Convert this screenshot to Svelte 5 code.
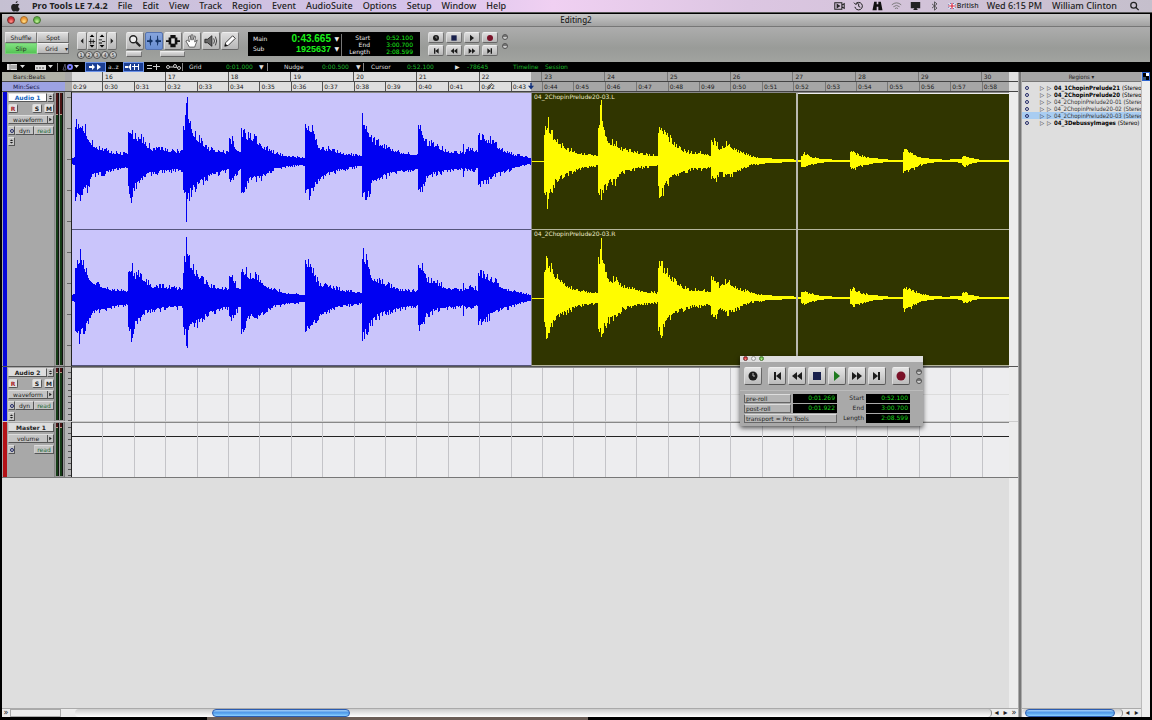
<script lang="ts">
	type Point = [x: number, up: number, down: number];

	const menus = ['File', 'Edit', 'View', 'Track', 'Region', 'Event', 'AudioSuite', 'Options', 'Setup', 'Window', 'Help'];
	const bars = Array.from({ length: 15 }, (_, i) => 16 + i);
	const seconds = Array.from({ length: 30 }, (_, i) => `0:${29 + i}`);

	const regions = [
		{ name: '04_1ChopinPrelude21', bold: true },
		{ name: '04_2ChopinPrelude20', bold: true },
		{ name: '04_2ChopinPrelude20-01' },
		{ name: '04_2ChopinPrelude20-02' },
		{ name: '04_2ChopinPrelude20-03', selected: true },
		{ name: '04_3DebussyImages', bold: true }
	];

	const tracks = [
		{ id: 'audio1', name: 'Audio 1', view: 'waveform', audio: true },
		{ id: 'audio2', name: 'Audio 2', view: 'waveform', audio: true },
		{ id: 'master', name: 'Master 1', view: 'volume', audio: false }
	];

	// envelope break points: x, height above and below the centre line
	const before: Point[] = [
		[0, 3, 3], [2, 4, 5], [3, 34, 34], [8, 39, 37], [12, 33, 30], [16, 22, 25], [20, 17, 15], [26, 13, 13], [32, 11, 12], [40, 8, 9], [55, 7, 7],
		[56, 26, 27], [59, 30, 40], [62, 22, 26], [67, 24, 22], [73, 17, 14], [80, 12, 12], [93, 11, 10], [110, 9, 9],
		[111, 28, 32], [113, 42, 36], [114, 63, 50], [116, 38, 33], [121, 27, 27], [128, 20, 22], [136, 12, 16], [146, 10, 12], [156, 8, 9],
		[157, 18, 20], [160, 21, 20], [164, 12, 13], [168, 10, 8], [169, 28, 31], [173, 26, 30], [177, 22, 17], [183, 21, 18], [190, 15, 16], [200, 9, 9], [213, 5, 6], [232, 3, 4],
		[233, 37, 32], [238, 34, 33], [242, 22, 25], [248, 12, 19], [256, 12, 13], [268, 8, 9], [289, 5, 5],
		[290, 42, 38], [295, 33, 34], [300, 20, 22], [308, 17, 17], [318, 12, 13], [328, 8, 11], [345, 7, 8],
		[346, 34, 27], [349, 32, 30], [354, 18, 17], [361, 17, 13], [373, 10, 10], [390, 8, 8], [391, 17, 17], [392, 8, 8], [398, 12, 10], [405, 8, 8],
		[406, 25, 26], [412, 22, 20], [418, 20, 18], [428, 12, 12], [438, 7, 9], [448, 5, 5], [459, 3, 3]
	];
	const after: Point[] = [
		[0, 0, 1], [11, 0, 1], [12, 30, 28], [15, 38, 40], [19, 27, 27], [24, 21, 20], [31, 13, 15], [39, 10, 11], [49, 7, 7], [65, 5, 5],
		[66, 36, 28], [69, 48, 35], [72, 30, 28], [77, 18, 20], [84, 17, 20], [89, 12, 11], [99, 10, 9], [109, 7, 6], [125, 5, 5],
		[126, 28, 28], [129, 32, 34], [133, 25, 25], [139, 20, 17], [149, 11, 12], [159, 8, 8], [169, 8, 8], [178, 6, 7],
		[179, 17, 17], [183, 18, 19], [187, 12, 11], [195, 17, 15], [201, 11, 13], [209, 8, 8], [219, 5, 4], [229, 3, 3], [244, 2, 2], [269, 1, 1],
		[270, 5, 5], [273, 7, 6], [279, 4, 4], [289, 2, 2], [304, 1, 1], [318, 1, 1],
		[319, 8, 7], [322, 9, 8], [329, 5, 5], [339, 3, 3], [359, 1, 1], [371, 1, 1],
		[372, 10, 11], [379, 8, 9], [389, 4, 4], [399, 2, 2], [414, 1, 1], [430, 2, 2], [432, 6, 6], [439, 3, 3], [449, 1, 1], [478, 1, 1]
	];

	function wave(points: Point[], seed: number) {
		let state = seed;
		const noise = () => (state = (state * 16807) % 2147483647) / 2147483647;
		const jitter = (v: number) => (v < 3 ? v : Math.round(v * (0.86 + noise() ** 2 * 0.42)));
		let d = '';
		let k = 0;
		for (let x = 0; x < points[points.length - 1][0]; x++) {
			while (points[k + 1][0] <= x) k++;
			const [x0, u0, d0] = points[k];
			const [x1, u1, d1] = points[k + 1];
			const t = (x - x0) / (x1 - x0);
			const up = jitter(u0 + (u1 - u0) * t);
			const down = jitter(d0 + (d1 - d0) * t);
			d += `M${x} ${-up}h1v${up + down}h-1z`;
		}
		return d;
	}

	const clips = [
		{ id: 'before', width: 459, points: before, label: '' },
		{ id: 'after', width: 478, points: after, label: '04_2ChopinPrelude20-03' }
	];

	const stepper = 'M2 5l4-4 4 4zM2 7l4 4 4-4z';
	const transport: [string, string][] = [
		['Return to zero', 'M3 2h2v8H3zM10 2v8L5 6z'],
		['Rewind', 'M6 2v8L1 6zM11 2v8L6 6z'],
		['Stop', 'M2 2h8v8H2z'],
		['Play', 'M3 1l6 5-6 5z'],
		['Fast forward', 'M1 2l5 4-5 4zM6 2l5 4-5 4z'],
		['Go to end', 'M2 2l5 4-5 4zM7 2h2v8H7z']
	];
	const compact = [2, 3, 0, 1, 4, 5];
</script>

{#snippet glyph(path: string, kind = '')}
	<svg class="glyph {kind}" viewBox="0 0 12 12" aria-hidden="true"><path d={path} /></svg>
{/snippet}
{#snippet clock()}
	<svg class="glyph" viewBox="0 0 12 12" aria-hidden="true"><circle cx="6" cy="6" r="4.5" /><path d="M6 3v3h2" fill="none" stroke="#bbb" /></svg>
{/snippet}
{#snippet record()}
	<svg class="glyph rec" viewBox="0 0 12 12" aria-hidden="true"><circle cx="6" cy="6" r="4.5" /></svg>
{/snippet}
{#snippet lights()}
	<div class="lights"><button aria-label="Close"></button><button aria-label="Minimize"></button><button aria-label="Zoom"></button></div>
{/snippet}

<div class="desktop">
	<nav class="menubar" aria-label="Menu bar">
		<svg class="apple" viewBox="0 0 14 14" aria-hidden="true"><path d="M9.7 0C9.8 1.500 8.700 2.900 7.200 3 7 1.600 8.300.2 9.700 0zM12 4.600C9.700 5.900 10.200 9 12.400 9.800 11.700 11.700 10.600 13.500 9.400 13.500c-1 0-1.300-.6-2.400-.6s-1.500.6-2.400.6C2.700 13.500.4 8.200 2 5.500c1.300-2.300 3.500-2 4.800-1.300C8.500 3.300 10.700 3 12 4.600z" /></svg>
		<button class="app">Pro Tools LE 7.4.2</button>
		{#each menus as menu (menu)}<button>{menu}</button>{/each}
		<div class="status">
			<svg viewBox="0 0 14 12" fill="none" stroke="#222" stroke-width="1.300"><path d="M1 2h9v8H1zM10 5l3-2v6l-3-2" /><path d="M4 4v4l3-2z" fill="#222" /></svg>
			<svg viewBox="0 0 12 12" fill="none" stroke="#222" stroke-width="1.200"><path d="M2.500 3.500A4.500 4.500 0 1 1 1.700 7M6.200 3v3.500l2 1M.5 2l2 2 2.500-1" /></svg>
			<svg viewBox="0 0 12 12"><path d="M2 1h3v3h2V1h3l2 10H7V7H5v4H0z" fill="#111" /></svg>
			<svg class="wifi" viewBox="0 0 14 12" fill="none" stroke="#777" stroke-width="1.200"><path d="M1 4.500q6-5 12 0M3 7q4-3.500 8 0M5 9.300q2-1.700 4 0" /></svg>
			<svg viewBox="0 0 14 12"><path d="M1 1h12v8H1zM4 11l3-4 3 4z" fill="#222" /></svg>
			<svg viewBox="0 0 12 12" fill="none" stroke="#444"><path d="M3 3.500l6 5-3 2.500V1l3 2.500-6 5" /></svg>
			<span class="lang">
				<svg viewBox="0 0 12 10"><path fill="#32479a" d="M0 0h12v10H0z" /><path stroke="#fff" stroke-width="2" d="M0 0l12 10M12 0L0 10" /><path stroke="#fff" stroke-width="4" d="M6 0v10M0 5h12" /><path stroke="#d3223c" stroke-width="2" d="M6 0v10M0 5h12" /></svg>
				British
			</span>
			<time>Wed 6:15 PM</time>
			<span class="user">William Clinton</span>
			<svg viewBox="0 0 12 12" fill="none" stroke="#222" stroke-width="1.500"><circle cx="5" cy="5" r="3.500" /><path d="M7.500 7.500L11 11" /></svg>
		</div>
	</nav>

	<main class="window">
		<header class="titlebar">{@render lights()}<h1>Editing2</h1></header>

		<div class="toolbar">
			<div class="modes">
				<button>Shuffle</button><button>Spot</button><button class="on">Slip</button><button>Grid<i>▾</i></button>
			</div>
			<div class="zoomer">
				<div class="row">
					<button aria-label="Zoom out">{@render glyph('M8 2v8L4 6z')}</button>
					<button aria-label="Audio zoom"><svg viewBox="0 0 10 16"><path d="M2 3l3-3 3 3zM2 13l3 3 3-3zM1 8h8v1H1zM3 5h1v7H3zM6 6h1v5H6z" /></svg></button>
					<button aria-label="MIDI zoom"><svg viewBox="0 0 10 16"><path d="M2 3l3-3 3 3zM2 13l3 3 3-3zM1 6h4v1H1zM5 8h4v1H5zM1 10h4v1H1z" /></svg></button>
					<button aria-label="Zoom in">{@render glyph('M4 2v8l4-4z')}</button>
				</div>
				<div class="presets">{#each [1, 2, 3, 4, 5] as n (n)}<button>{n}</button>{/each}</div>
			</div>
			<div class="tools">
				<div class="row">
					<button aria-label="Zoomer"><svg viewBox="0 0 16 16"><circle cx="6" cy="6" r="4" fill="#eee" stroke="#222" stroke-width="1.500" /><path d="M9 9l5 5" stroke="#222" stroke-width="2.500" /></svg></button>
					<button class="active" aria-label="Trim"><svg viewBox="0 0 16 16"><path d="M4 2v12M12 2v12" stroke="#123163" stroke-dasharray="5 1" fill="none" /><path d="M7 8L3 5v2H0v2h3v2zM9 8l4-3v2h3v2h-3v2z" fill="#123163" /></svg></button>
					<button aria-label="Selector"><svg viewBox="0 0 16 16"><path d="M0 7h3V4h2V1h6v3h2v3h3v2h-3v3h-2v3H5v-3H3V9H0z" fill="#111" /><path d="M6 5h4v6H6z" fill="#ddd" /></svg></button>
					<button aria-label="Grabber"><svg viewBox="0 0 16 16"><path d="M5 15L1 8l2-1 2 2-1-6 2-1 1 5V1h2v6l2-5 1 1-1 6 3-2-3 8z" fill="#fff" stroke="#555" /></svg></button>
					<button aria-label="Scrubber"><svg viewBox="0 0 16 16"><path d="M1 6h3l5-4v12L4 10H1z" fill="#666" stroke="#222" /><path d="M11 5q2 3 0 6M13 3q3 5 0 10" fill="none" stroke="#333" /></svg></button>
					<button aria-label="Pencil"><svg viewBox="0 0 16 16"><path d="M2 14l1-4 8-8 3 3-8 8z" fill="#fff" stroke="#222" /><path d="M2 14l1-3 2 2z" /></svg></button>
				</div>
				<div class="under"><button aria-label="Zoom toggle"></button><button aria-label="Smart tool"></button></div>
			</div>
			<div class="counters">
				<dl class="main"><dt>Main</dt><dd>0:43.665</dd><i>▼</i><dt>Sub</dt><dd class="sub">1925637</dd><i>▼</i></dl>
				<dl class="range"><dt>Start</dt><dd>0:52.100</dd><dt>End</dt><dd>3:00.700</dd><dt>Length</dt><dd>2:08.599</dd></dl>
			</div>
			<div class="mini-transport">
				<button aria-label="Online">{@render clock()}</button>
				{#each compact.slice(0, 2) as i (i)}<button aria-label={transport[i][0]}>{@render glyph(transport[i][1], i === 2 ? 'stop' : '')}</button>{/each}
				<button aria-label="Record">{@render record()}</button>
				{#each compact.slice(2) as i (i)}<button aria-label={transport[i][0]}>{@render glyph(transport[i][1])}</button>{/each}
			</div>
			<div class="leds"><i></i><i></i></div>
		</div>

		<div class="strip">
			<svg viewBox="0 0 18 8"><path d="M0 1h10v6H0zM13 2h5l-2.500 3z" fill="#ddd" /><path d="M3 1v6M4 3h6M4 5h6" stroke="#777" /></svg>
			<svg viewBox="0 0 18 8"><path d="M0 2h11v5H0zM13 2h5l-2.500 3z" fill="#ddd" /><path d="M1 5h9" stroke="#555" stroke-dasharray="2 1" /></svg>
			<span class="bar"></span>
			<svg viewBox="0 0 18 8"><path d="M2 7l2-6 1 6z" fill="none" stroke="#556" /><circle cx="9" cy="4" r="2" fill="none" stroke="#7d80ff" stroke-width="2" /><path d="M13 2h5l-2.500 3z" fill="#ddd" /></svg>
			<button class="blue" aria-label="Tab to transients"><svg viewBox="0 0 18 8"><path d="M3 3h3V1l3 3-3 3V5H3zM11 1l4 3-4 3z" fill="#fff" /></svg></button>
			<button>a..z</button>
			<button class="blue" aria-label="Link edit selection"><svg viewBox="0 0 18 8"><path d="M1 3h3v2H1zM6 1h1v6H6zM10 1h1v6h-1zM14 1h1v6h-1zM4 4l2-2v4zM8 3h7v1H8z" fill="#fff" /></svg></button>
			<button aria-label="Link track selection"><svg viewBox="0 0 18 8"><path d="M2 2h5v1H2zM2 5h5v1H2zM8 3h7v1H8zM11 1h1v6h-1z" fill="#ccc" /></svg></button>
			<button aria-label="Automation follows edit"><svg viewBox="0 0 18 8"><path d="M3 4h7l5 1" stroke="#ccc" fill="none" /><circle cx="3" cy="4" r="1.500" stroke="#ccc" /><circle cx="10" cy="3" r="1.500" stroke="#ccc" /><circle cx="14" cy="5" r="1.500" stroke="#ccc" /></svg></button>
			<span class="bar"></span>
			<label for="grid">Grid</label>
			<select id="grid"><option>0:01.000</option></select><i>▼</i>
			<span class="bar"></span>
			<label for="nudge">Nudge</label>
			<select id="nudge"><option>0:00.500</option></select><i>▼</i>
			<span class="bar"></span>
			<span>Cursor</span><output>0:52.100</output><i>▶</i><output>-78645</output>
			<span class="go">Timeline</span><span class="go">Session</span>
		</div>

		<div class="workspace">
			<section class="edit" aria-label="Edit window">
				<div class="ruler bars">
					<strong>Bars:Beats</strong>
					<div class="ticks"><span></span>{#each bars as bar (bar)}<span class:dark={bar > 22}>{bar}</span>{/each}<b></b></div>
				</div>
				<div class="ruler secs">
					<strong>Min:Secs</strong>
					<div class="ticks">
						{#each seconds as s, i (s)}<span class:dark={i > 14}>{s}</span>{/each}<b></b>
						<svg class="playhead" viewBox="0 0 8 10"><path d="M3 0h2v4h3L4 9 0 4h3z" fill="#10307c" /></svg>
						<svg class="pencil" viewBox="0 0 8 10"><path d="M1 9l1-3 4-5 1 1-4 5z" fill="#fff" stroke="#222" /></svg>
					</div>
				</div>

				{#each tracks as track (track.id)}
					<article class="track {track.id}">
						<div class="head">
							<div class="name"><button>{track.name}</button>{#if track.audio}<button class="step" aria-label="Playlist">{@render glyph(stepper)}</button>{/if}</div>
							{#if track.audio}<div class="rsm"><button class="arm">R</button><button>S</button><button>M</button></div>{/if}
							<div class="view"><select aria-label="Track view"><option>{track.view}</option></select><i>{@render glyph('M3 2v8l6-4z')}</i></div>
							<div class="auto"><button class="o" aria-label="Track options"></button>{#if track.audio}<button class="dyn">dyn</button>{/if}<button class="read">read</button></div>
							{#if track.audio}<button class="step" aria-label="Track height">{@render glyph(stepper)}</button>{/if}
						</div>
						<div class="meters"><i></i><i></i></div>
						<div class="scale"></div>
						<div class="lane">
							{#if track.id === 'audio1'}
								{#each clips as clip, c (clip.id)}
									<div class="clip {clip.id}">
										{#each ['L', 'R'] as side, n (side)}
											<div class="channel">
												<svg viewBox="0 -68 {clip.width} 136" preserveAspectRatio="none" shape-rendering="crispEdges" aria-hidden="true"><path d={wave(clip.points, 97 + c * 31 + n * 1013)} /></svg>
												{#if clip.label}<span>{clip.label}.{side}</span>{/if}
											</div>
										{/each}
										{#if clip.id === 'after'}<i class="edit-cursor"></i>{/if}
									</div>
								{/each}
							{:else}
								{#each seconds as s (s)}<span class="cell"></span>{/each}
							{/if}
						</div>
					</article>
				{/each}
				<div class="empty"></div>
				<div class="hscroll">
					<b>»</b><span class="stub"></span>
					<div class="groove"><i></i></div>
					<button aria-label="Scroll left">◂</button><button aria-label="Scroll right">▸</button><b>»</b>
				</div>
			</section>
			<div class="gutter"></div>

			<aside class="regions">
				<h2>Regions ▾</h2>
				<ul>
					{#each regions as r (r.name)}
						<li class:bold={r.bold} class:selected={r.selected}><i class="o"></i><em>▷</em><em>▷</em><a href="#{r.name}">{r.name} <small>(Stereo)</small></a></li>
					{/each}
				</ul>
				<div class="hscroll"><div class="groove"><i></i></div><button aria-label="Scroll left">◂</button><button aria-label="Scroll right">▸</button></div>
			</aside>
			<div class="side-scroll"><button aria-label="Region list menu"></button></div>
		</div>

		<section class="panel" aria-label="Transport">
			<header>{@render lights()}</header>
			<div class="keys">
				<button aria-label="Online">{@render clock()}</button>
				<div>
					{#each transport as [name, path] (name)}<button aria-label={name}>{@render glyph(path, name.toLowerCase())}</button>{/each}
				</div>
				<button aria-label="Record">{@render record()}</button>
				<div class="leds"><i></i><i></i></div>
			</div>
			<div class="fields">
				<button>pre-roll</button><output>0:01.269</output><span>Start</span><output>0:52.100</output>
				<button>post-roll</button><output>0:01.922</output><span>End</span><output>3:00.700</output>
				<button class="wide">transport = Pro Tools</button><span>Length</span><output>2:08.599</output>
			</div>
		</section>
	</main>
	<div class="dock"></div>
</div>

<style>
	:global(body) { background: #000; }
	.desktop, .desktop * { box-sizing: border-box; }
	.desktop { display: flex; flex-direction: column; min-height: 100vh; overflow: hidden; background: #000; color: #222; font: 6px/8px "DejaVu Sans", sans-serif; }
	button, select { margin: 0; padding: 0; border: 0; border-radius: 0; background: none; color: inherit; font: inherit; appearance: none; }
	i, em { font-style: normal; }
	svg { display: block; }
	h1, h2, ul, dl, dd { margin: 0; padding: 0; }

	.menubar { display: flex; align-items: center; gap: 10px; height: 13px; padding: 0 12px 0 10px; background: linear-gradient(90deg, #c5c0d2, #d5c3ea 35%, #f0d0f2 48%, #dcc6e2 65%, #c5bfcc); border-bottom: 1px solid #555; font: 500 9px/12px "Noto Sans", sans-serif; white-space: nowrap; }
	.app { font-weight: 700; margin-left: 1px; }
	.apple { width: 11px; height: 11px; fill: #222; }
	.status { display: flex; align-items: center; gap: 8px; margin-left: auto; }
	.status svg { width: 11px; height: 10px; }
	.lang { display: flex; align-items: center; gap: 1px; font-size: 7px; }
	.lang svg { width: 8px; height: 6px; }
	.user { margin: 0 4px 0 2px; }

	.window { position: relative; flex: 1; display: flex; flex-direction: column; margin: 1px 2px 0; background: #a3a3a3; }
	.titlebar { position: relative; height: 13px; padding: 2px 5px; background: linear-gradient(#c8c8c8, #a2a2a2); border-bottom: 1px solid #777; }
	h1 { position: absolute; inset: 0; text-align: center; font: 500 8px/12px "Noto Sans", sans-serif; }
	.lights { display: flex; gap: 5px; position: relative; z-index: 1; }
	.lights button { width: 8px; height: 8px; border-radius: 50%; border: 1px solid #703030; background: radial-gradient(circle at 50% 75%, #ff9a90, #d62d32 60%); }
	.lights button:nth-child(2) { border-color: #a06a2a; background: radial-gradient(circle at 50% 75%, #ffe28a, #ef9a35 60%); }
	.lights button:nth-child(3) { border-color: #44782f; background: radial-gradient(circle at 50% 75%, #c8f59a, #62b546 60%); }

	.toolbar { display: flex; align-items: flex-start; gap: 8px; height: 35px; padding: 5px 3px; background: linear-gradient(#adadad, #999b98 60%, #a1a39f); }
	.toolbar button { border: 1px solid; border-color: #eee #777 #666 #ddd; background: linear-gradient(#dedede, #b6b6b6); }
	.row { display: flex; }
	.modes { display: grid; grid-template-columns: 32px 32px; grid-auto-rows: 11px; line-height: 8px; }
	.modes .on { background: linear-gradient(#7fe27f, #55c455); border-color: #7c7; }
	.modes i { float: right; }
	.zoomer .row button { display: grid; place-items: center; width: 10px; height: 18px; padding: 0; border-radius: 2px; }
	.zoomer .row svg { width: 8px; height: 14px; }
	.presets { display: flex; margin-top: 1px; }
	.presets button { width: 8px; height: 8px; border-radius: 50%; border-color: #555; font-size: 5px; line-height: 6px; }
	.tools { margin-left: 1px; }
	.tools .row { gap: 1px; }
	.tools .row button { display: grid; place-items: center; width: 18px; height: 18px; border-radius: 2px; }
	.tools .row svg { width: 14px; height: 14px; }
	.tools .row .active { background: linear-gradient(#86a4dc, #6a8fd3); border-color: #5573b0; }
	.under { display: flex; gap: 18px; margin-top: 1px; }
	.under button { width: 16px; height: 6px; }
	.under button + button { width: 25px; }
	.counters { display: flex; height: 24px; margin-left: 1px; background: #000; color: #eee; padding: 2px 5px 0; gap: 4px; }
	.main { display: grid; grid-template-columns: 28px 50px 10px; grid-auto-rows: 10px; align-items: center; border-right: 1px solid #777; }
	.counters dd { color: #19f019; text-align: right; }
	.main dd { font: 700 10px/10px "Liberation Sans", sans-serif; }
	.main .sub { font-size: 9px; }
	.main i { text-align: right; padding-right: 2px; }
	.range { display: grid; grid-template-columns: 24px 43px; grid-auto-rows: 7px; line-height: 7px; text-align: right; width: 69px; }
	.mini-transport { display: grid; grid-template-columns: repeat(4, 16px); gap: 2px; }
	.mini-transport button { display: grid; place-items: center; height: 11px; border-radius: 2px; }
	.mini-transport .glyph { width: 8px; height: 8px; }
	.glyph { width: 10px; height: 10px; fill: #1c1c1c; }
	.glyph.rec { fill: #7a1128; }
	.glyph.stop { fill: #18204c; }
	.glyph.play { fill: #1f7a1f; }
	.leds { display: grid; gap: 3px; margin-top: 2px; }
	.leds i { width: 6px; height: 6px; border: 1px solid #555; border-radius: 50%; background: linear-gradient(#777 50%, #ccc 50%); }
	.toolbar > .leds { margin-left: -4px; }

	.strip { display: grid; grid-template-columns: 28px 22px 4px 25px 22px 16px 21px 20px 17px 7px 37px 33px 8px 17px 38px 34px 7px 8px 36px 48px 12px 46px 32px 30px; align-items: center; height: 10px; padding-left: 5px; background: #000; color: #ddd; white-space: nowrap; }
	.strip svg { width: 18px; height: 8px; }
	.strip .blue { width: 19px; height: 8px; background: #1c3f94; outline: 1px solid #6b92e8; }
	.strip .bar { width: 1px; height: 8px; background: #888; }
	.strip select, .strip output, .strip .go { color: #1cba2a; }
	.strip button { text-align: left; }

	.workspace { flex: 1; display: flex; min-height: 0; }
	.edit { flex: 1; display: flex; flex-direction: column; min-width: 0; }
	.gutter { width: 4px; background: #777; border: 1px solid #aaa; border-width: 0 1px; }
	.ruler { display: grid; grid-template-columns: 70px 1fr; height: 10px; border-bottom: 1px solid #444; background: #aaa; padding-right: 9px; box-shadow: inset -9px 0 #e0e0e0; }
	.ruler strong { width: 63px; padding-left: 11px; background: #b1b2a8; font-weight: 400; line-height: 9px; }
	.secs strong { background: #9ca2e2; color: #16164c; }
	.ticks { position: relative; display: grid; background: #dedede; line-height: 9px; min-width: 0; }
	.ticks b { position: absolute; z-index: 0; left: 49%; right: 0; top: 0; bottom: 0; background: #a6a6a6; }
	.ticks span { position: relative; z-index: 1; border-left: 1px solid #555; padding-left: 1px; min-width: 0; }
	.ticks span:first-child { border: 0; }
	.ticks .dark { border-color: #777; }
	.bars .ticks { grid-template-columns: 48fr repeat(14, 100fr) 45fr; }
	.bars .ticks span { padding-left: 2px; }
	.secs .ticks { grid-template-columns: 97fr repeat(28, 100fr) 87fr; }
	.playhead, .pencil { position: absolute; z-index: 2; top: 0; width: 6px; height: 9px; left: calc(49% - 3px); }
	.pencil { left: 44.3%; }

	.track { --tint: #0505d8; display: grid; grid-template-columns: 5px 48px 9px 8px 1fr; padding-right: 9px; background: #a8a8a8; box-shadow: inset -9px 0 #ececec; }
	.track::before { content: ''; background: var(--tint); margin-left: 1px; }
	.audio1 { height: 275px; border-bottom: 1px solid #555; }
	.audio2 { height: 55px; border-bottom: 1px solid #ccc; }
	.master { --tint: #b31217; height: 56px; border-bottom: 1px solid #777; }
	.head { display: flex; flex-direction: column; gap: 2px; padding: 1px 0 0 1px; border-right: 1px solid #888; line-height: 7px; }
	.head button, .view { border: 1px solid; border-color: #ddd #555 #555 #ccc; background: #c4c4c4; }
	.name, .rsm, .view, .auto { display: flex; height: 9px; }
	.name button:first-child { flex: 1; background: #ddd; font-weight: 700; }
	.audio1 .name button:first-child { background: #fff; color: #1565c0; }
	.head .step { display: grid; place-items: center; width: 7px; height: 9px; }
	.head .glyph { width: 5px; height: 7px; }
	.rsm { gap: 2px; }
	.rsm button { width: 10px; border-radius: 2px; background: #e2e2e2; font-weight: 700; }
	.rsm .arm { margin-right: auto; color: #a51b25; }
	.view select { flex: 1; min-width: 0; text-align: center; text-align-last: center; }
	.view i { width: 6px; border-left: 1px solid #555; }
	.auto .o { display: grid; place-items: center; width: 7px; }
	.auto .o::after, .regions .o::after { content: ''; display: block; width: 2px; height: 2px; border: 1px solid #232a68; border-radius: 50%; }
	.auto .dyn { flex: 1; }
	.auto .read { width: 20px; margin-left: auto; color: #236a3a; }
	.meters { display: flex; gap: 1px; padding: 1px; background: #999; }
	.meters i { width: 3px; background: linear-gradient(#4a1414 4px, #b98 4px 5px, #153c16 5px); border: 1px solid #111; border-width: 0 1px 0 0; }
	.audio1 .meters i { background: linear-gradient(#4a1414 21px, #b98 21px 22px, #153c16 22px); }
	.scale { border: 1px solid #777; border-width: 0 1px; border-right-color: #222; background: linear-gradient(90deg, #b4b4b4 50%, transparent 50%), repeating-linear-gradient(#b4b4b4 0 5px, #555 5px 6px); }
	.audio1 .scale { background: linear-gradient(90deg, #b4b4b4 30%, transparent 30%), repeating-linear-gradient(#b4b4b4 0 5px, #666 5px 6px, #b4b4b4 6px 31px); }
	.lane { display: grid; grid-template-columns: 97fr repeat(28, 100fr) 87fr; position: relative; background: #ededef; border-top: 1px solid #888; }
	.cell { border-left: 1px solid #c4c4c8; background: linear-gradient(transparent 49%, #dcdcdc 49% 51%, transparent 51%); }
	.cell:first-child { border: 0; }
	.master .cell { background: linear-gradient(transparent 13px, #222 13px 14px, transparent 14px); }
	.audio1 .lane { grid-template-columns: 459fr 478fr; }
	.clip { position: relative; display: grid; grid-template-rows: 1fr 1fr; min-width: 0; }
	.channel { position: relative; border-bottom: 1px solid #55557c; min-height: 0; }
	.channel svg { position: absolute; width: 100%; height: 100%; }
	.channel span { position: absolute; left: 2px; top: 0; color: #ece9c8; }
	.before { background: #cac5fb; fill: #0000f2; }
	.after { background: #303500; fill: #fffc00; border-left: 1px solid #888; }
	.after::before { content: ''; position: absolute; top: 0; left: 55.4%; right: 0; height: 1px; background: #eee; }
	.after .channel { border-color: #b5b69c; }
	.edit-cursor { position: absolute; top: 0; bottom: 0; left: 55.4%; width: 2px; background: #b9b9b0; }
	.empty { flex: 1; background: #dedede; box-shadow: inset -9px 0 #ececec; }

	.hscroll { display: flex; align-items: center; height: 9px; background: #ececec; border-top: 1px solid #aaa; }
	.hscroll b { width: 8px; font-weight: 400; font-size: 8px; text-align: center; }
	.hscroll button { width: 9px; font-size: 8px; }
	.stub { width: 51px; height: 8px; border: 1px solid #aaa; margin-right: 14px; }
	.groove { flex: 1; height: 8px; border-radius: 4px; background: linear-gradient(#ccc, #fff); border-right: 1px solid #888; }
	.groove i { display: block; width: 15%; height: 8px; margin-left: 15%; border: 1px solid #2a5cb0; border-radius: 4px; background: linear-gradient(#a3cdf5, #4d98e8 45%, #8bd0ff); }
	.regions { display: flex; flex-direction: column; width: 119px; background: #dedede; overflow: hidden; font-family: "DejaVu Sans Condensed", "DejaVu Sans", sans-serif; }
	h2 { height: 10px; background: #a5a5a5; border-bottom: 1px solid #777; font: inherit; line-height: 9px; text-align: center; }
	.regions ul { flex: 1; list-style: none; padding-top: 2px; }
	.regions li { display: flex; align-items: center; height: 7px; line-height: 7px; padding-left: 3px; white-space: nowrap; }
	.regions li > * { flex: none; }
	.regions li .o { width: 15px; }
	.regions em { width: 7px; }
	.regions li a { color: #333; text-decoration: none; }
	.regions small { font-size: 6px; font-weight: 400; }
	.regions .bold a { color: #000; font-weight: 700; }
	.selected { background: #a9cdf2; }
	.regions .groove i { width: 90%; margin-left: 3px; }
	.side-scroll { flex: 0 0 9px; background: #eee; border-left: 1px solid #bbb; }
	.side-scroll button { display: block; width: 8px; height: 9px; border: 1px solid #2b62cf; background: conic-gradient(#fff 25%, #000 0 50%, #357 0 75%, #000 0); }

	.panel { position: absolute; left: 738px; top: 342px; width: 183px; height: 70px; background: #a9a9a9; box-shadow: 0 2px 5px #000a; line-height: 8px; }
	.panel header { height: 6px; padding: 0 3px; background: #dedede; }
	.panel .lights { gap: 3px; }
	.panel .lights button { width: 5px; height: 5px; }
	.panel .lights button:nth-child(2) { background: #eee; border-color: #999; }
	.keys { display: flex; align-items: center; height: 29px; padding-left: 4px; gap: 6px; border-bottom: 1px solid #bbb; }
	.keys > div { display: flex; gap: 2px; }
	.keys button { display: grid; place-items: center; width: 18px; height: 18px; border: 1px solid; border-color: #eee #666 #555 #ddd; border-radius: 2px; background: linear-gradient(#e4e4e4, #bbb); }
	.keys .glyph { width: 12px; height: 12px; }
	.keys .leds { display: grid; gap: 3px; margin: 0; }
	.fields { display: grid; grid-template-columns: 47px 44px 25px 44px; gap: 1px 2px; grid-auto-rows: 9px; padding: 3px 4px; }
	.fields button { border: 1px solid #666; border-top-color: #ddd; padding-left: 1px; text-align: left; background: #b5b5b5; line-height: 6px; }
	.fields .wide { grid-column: span 2; }
	.fields span { text-align: right; }
	.fields output { background: #000; color: #19d819; text-align: right; padding-right: 2px; }
	.dock { height: 3px; background: linear-gradient(90deg, #000 18%, #6a5d56 18% 51%, #000 51%); }
</style>
